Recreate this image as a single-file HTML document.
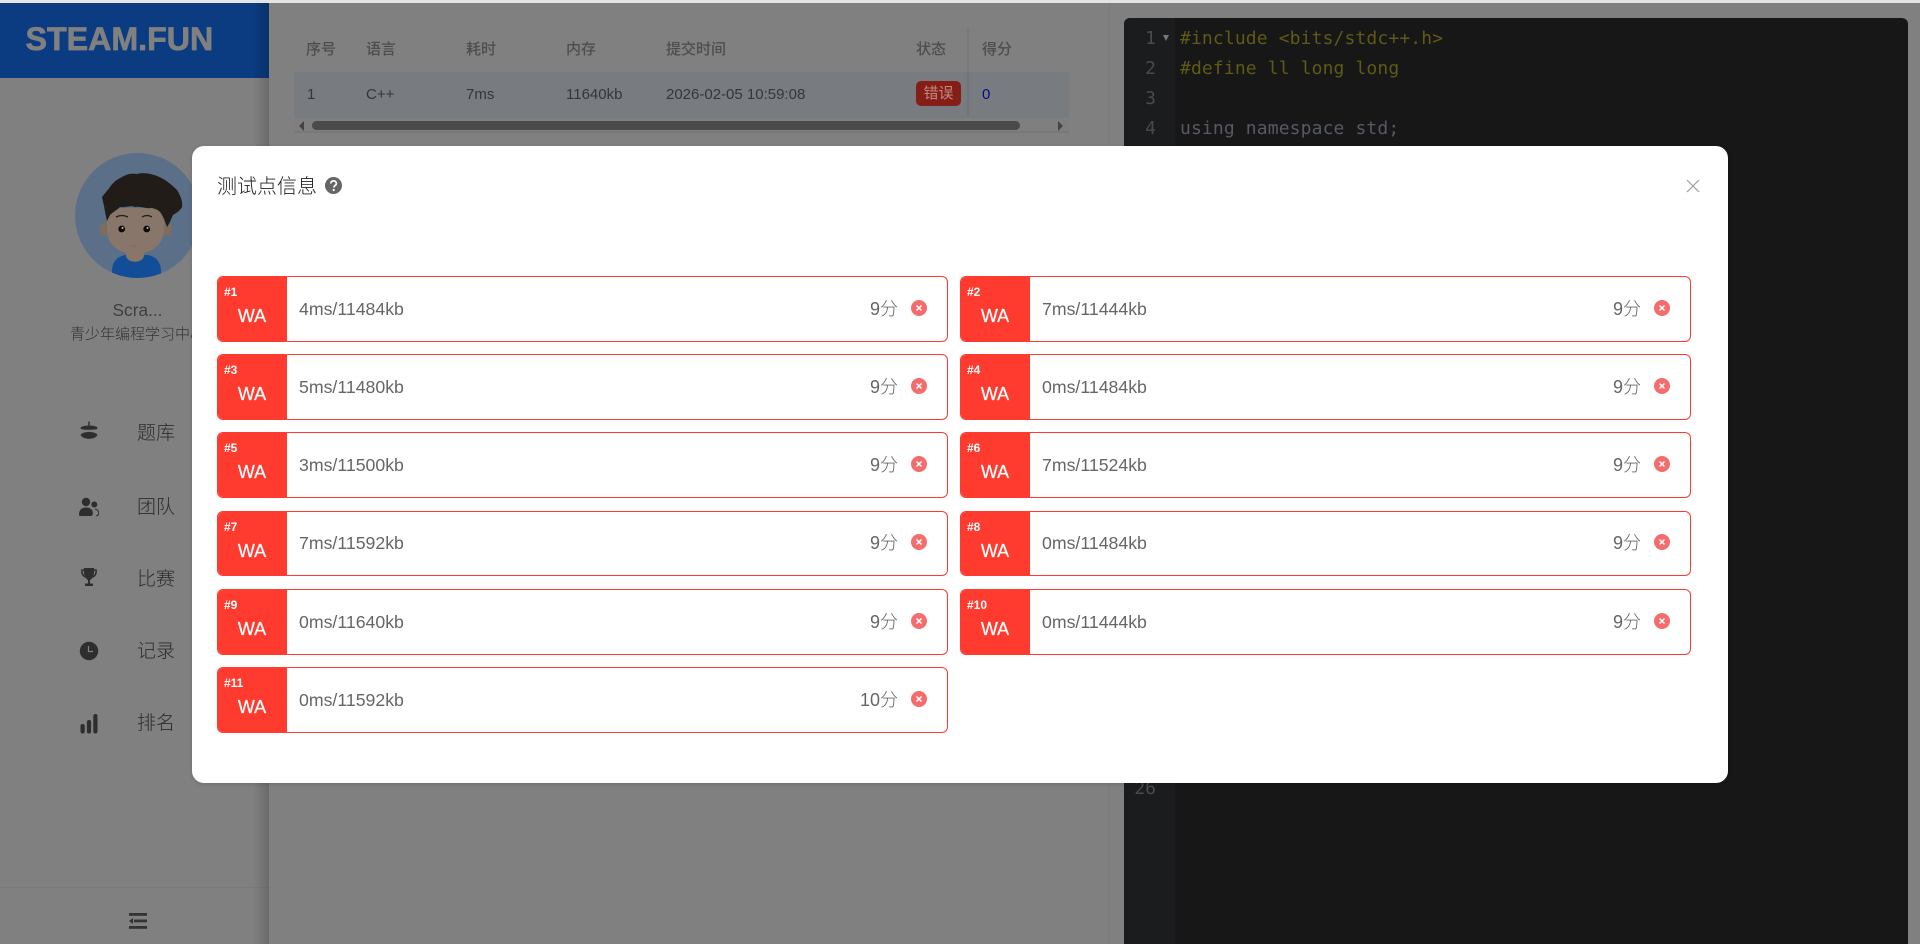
<!DOCTYPE html>
<html lang="zh"><head><meta charset="utf-8"><title>测试点信息</title>
<style>
*{box-sizing:border-box}
html,body{margin:0;padding:0;width:1920px;height:944px;overflow:hidden;background:#808080;font-family:"Liberation Sans","Noto Sans CJK SC",sans-serif}
.a{position:absolute;white-space:nowrap}
#top{left:0;top:0;width:1920px;height:3px;background:#e4e4e4}
#side{left:0;top:3px;width:269px;height:941px;background:#808080}
#sideshadow{left:253px;top:3px;width:16px;height:941px;background:linear-gradient(90deg,rgba(0,0,0,0),rgba(0,0,0,.17));z-index:3}
#logo{left:0;top:3px;width:269px;height:75px;background:#0b3b80}
#logot{left:25.500px;top:19px;font-size:32.2px;line-height:40px;font-weight:bold;color:#808080;-webkit-text-stroke:.7px #808080}
.m{left:137px;font-size:19px;line-height:26px;color:#2c2c2c;font-weight:300}
.ic{position:absolute;left:79px}
.th{top:40px;font-size:15px;line-height:20px;color:#4d4d4d;font-weight:500}
.td{top:85px;font-size:15px;line-height:20px;color:#363636}
.ln{left:1126px;width:30px;text-align:right;font:18px/30px "DejaVu Sans Mono",monospace;color:#4a4a4a;z-index:2}
.cd{left:1180px;font:18px/30px "DejaVu Sans Mono",monospace;letter-spacing:.13px;z-index:2}
#modal{left:192px;top:146px;width:1536px;height:637px;background:#fff;border-radius:12px;z-index:5;box-shadow:0 1px 4px rgba(0,0,0,.15)}
.c{position:absolute;width:731px;height:66px;background:#fff;border:1px solid #ff3b30;border-radius:6px;z-index:6;overflow:hidden}
.b{position:absolute;left:-1px;top:-1px;width:70px;height:66px;background:#ff3b30;color:#fff}
.n{position:absolute;left:7px;top:8px;font-size:12px;line-height:16px;font-weight:bold}
.w{position:absolute;left:0;width:70px;top:29px;text-align:center;font-size:18px;line-height:22px;-webkit-text-stroke:.25px #fff}
.t{position:absolute;left:81px;top:20px;font-size:17.7px;line-height:24px;color:#666}
.s{position:absolute;right:49px;top:19px;font-size:18px;line-height:26px;color:#666;font-weight:300}
.x{position:absolute;left:693px;top:23px;width:16px;height:16px}
.r4{height:65px}
.r4 .t{top:19px}.r4 .s{top:18px}.r4 .x{top:22px}
</style></head><body>
<div class="a" id="top"></div>
<div class="a" id="side"></div>
<div class="a" id="logo"></div>
<div class="a" id="logot">STEAM.FUN</div>
<div class="a" id="sideshadow"></div>

<svg class="a" style="left:75px;top:153px" width="125" height="125" viewBox="0 0 125 125">
<defs><clipPath id="av"><circle cx="62.5" cy="62.5" r="62.5"/></clipPath></defs>
<g clip-path="url(#av)"><rect width="125" height="125" fill="#5b7088"/>
<path d="M37 125V118C37 108 44 102 52 102H71C79 102 86 108 86 118V125Z" fill="#124d97"/>
<path d="M51 92H69V102C69 111 51 111 51 102Z" fill="#8a7668"/>
<circle cx="31" cy="76" r="7" fill="#7d6c60"/><circle cx="90" cy="76" r="7" fill="#7d6c60"/>
<path d="M32 55H89V76C89 92 76 101 60 101S32 92 32 76Z" fill="#877669"/>
<path d="M32 68C30 60 29 52 27 44C30 40 33 37 35 34C39 28 43 26 47 24C52 21 57 20 62 21C69 19 76 21 82 23C90 26 97 32 102 37C105 42 108 48 107 54C105 58 101 60 98 62C96 66 95 70 92 74C90 68 88 63 85 59C82 56 80 56 77 55C71 56 66 53 60 54C55 52 50 55 45 54C42 57 38 59 35 62C34 64 33 66 32 68Z" fill="#211c17"/>
<path d="M41 64q6-3 12 0M67 64q5-3 10 0" stroke="#211c17" stroke-width="1.300" fill="none"/>
<circle cx="46.700" cy="76" r="3.400" fill="#0e0c0b"/><circle cx="71.700" cy="76" r="3.400" fill="#0e0c0b"/>
<circle cx="47.500" cy="75" r="1" fill="#bbb"/><circle cx="72.500" cy="75" r="1" fill="#bbb"/>
<circle cx="59" cy="84" r="1.100" fill="#9a6d62"/>
<path d="M55 92.500q4 1 8-.5q-3 3.500-8 .5z" fill="#a2604f"/></g></svg>

<div class="a" style="left:0;width:275px;top:298px;text-align:center;font-size:17.3px;line-height:24px;color:#3e3e3e">Scra...</div>
<div class="a" style="left:70px;top:325px;font-size:15px;line-height:20px;color:#333;font-weight:300">青少年编程学习中心</div>

<svg class="ic" style="top:421px" width="20" height="20" viewBox="0 0 20 20" fill="#2e2e2e"><rect x="9.300" y="0.500" width="1.400" height="4"/><path d="M2 6C6 4 14 4 18 6L18.500 8C14 9 6 9 1.500 8Z"/><path d="M1.500 14C4 9.800 16 9.800 18.500 14 16 19 4 19 1.500 14Z"/></svg>
<svg class="ic" style="top:497px" width="20" height="20" viewBox="0 0 20 20" fill="#2e2e2e"><circle cx="7" cy="5" r="4.200"/><circle cx="15.300" cy="7.500" r="3"/><path d="M0 18c0-5.500 3-7.500 7-7.500s6.500 1.800 6.800 5c.2 2-.6 3.500-2 3.500H1.500C.5 19 0 18.700 0 18z"/><path d="M16 12c2.500.5 3.700 2.300 3.700 4.300 0 1.500-.8 2.400-2.500 2.400" fill="none" stroke="#2e2e2e" stroke-width="1"/></svg>
<svg class="ic" style="top:567px" width="20" height="20" viewBox="0 0 20 20" fill="#2e2e2e"><path d="M5 1h10s.5 4-.5 7.500c-.8 2.500-2.300 4-3.500 4.500v3.500h3V19H6v-2.500h3V13C7.800 12.500 6.300 11 5.500 8.500 4.500 5 5 1 5 1z"/><path d="M5 3H3c-.7 3 .8 6 3.500 7M15 3h2c.7 3-.8 6-3.500 7" fill="none" stroke="#2e2e2e" stroke-width="1.600"/></svg>
<svg class="ic" style="top:641px" width="20" height="20" viewBox="0 0 20 20"><circle cx="10" cy="10" r="9.200" fill="#2e2e2e"/><path d="M9.500 5v5.500h4.500" fill="none" stroke="#808080" stroke-width="1.200"/></svg>
<svg class="ic" style="top:714px" width="20" height="20" viewBox="0 0 20 20" fill="#2e2e2e"><rect x="1.500" y="10" width="4.200" height="9.500" rx="2"/><rect x="7.900" y="6" width="4.200" height="13.500" rx="2"/><rect x="14.300" y="0" width="4.200" height="19.500" rx="2"/></svg>
<div class="a m" style="top:421px">题库</div>
<div class="a m" style="top:495px">团队</div>
<div class="a m" style="top:567px">比赛</div>
<div class="a m" style="top:639px">记录</div>
<div class="a m" style="top:711px">排名</div>
<div class="a" style="left:0;top:887px;width:269px;height:1px;background:#7a7a7a"></div>
<svg class="a" style="left:129px;top:913px" width="18" height="16" viewBox="0 0 18 16" fill="#333"><rect x="0" y="0" width="18" height="2.800"/><rect x="5" y="6.500" width="13" height="2.800"/><path d="M0 8l4-3v6z"/><rect x="0" y="13" width="18" height="2.800"/></svg>

<!-- table -->
<div class="a" style="left:294px;top:72px;width:775px;height:46px;background:#787b80"></div>
<div class="a" style="left:294px;top:118px;width:775px;height:15px;background:#7f7f7f;border-bottom:2px solid #77777d"></div>
<div class="a" style="left:312px;top:121px;width:708px;height:9px;background:#4a4a4a;border-radius:5px"></div>
<div class="a" style="left:299px;top:121px;width:0;height:0;border:5px solid transparent;border-right-color:#444;border-left:0"></div>
<div class="a" style="left:1058px;top:121px;width:0;height:0;border:5px solid transparent;border-left-color:#444;border-right:0"></div>
<div class="a" style="left:967px;top:28px;width:2px;height:90px;background:rgba(0,0,0,.05)"></div>
<div class="a th" style="left:306px">序号</div><div class="a th" style="left:366px">语言</div><div class="a th" style="left:466px">耗时</div><div class="a th" style="left:566px">内存</div><div class="a th" style="left:666px">提交时间</div><div class="a th" style="left:916px">状态</div><div class="a th" style="left:982px">得分</div>
<div class="a td" style="left:307px">1</div><div class="a td" style="left:366px">C++</div><div class="a td" style="left:466px">7ms</div><div class="a td" style="left:566px">11640kb</div><div class="a td" style="left:666px">2026-02-05 10:59:08</div>
<div class="a" style="left:916px;top:81px;width:45px;height:25px;background:#861e18;border-radius:5px;color:#c08a82;font-size:15px;line-height:25px;text-align:center">错误</div>
<div class="a td" style="left:982px;color:#0a0a86">0</div>

<!-- editor -->
<div class="a" style="left:1109px;top:3px;width:1px;height:941px;background:#7b7b7b"></div>
<div class="a" style="left:1124px;top:18px;width:784px;height:926px;background:#171717;border-radius:6px 6px 0 0"></div>
<div class="a" style="left:1124px;top:18px;width:51px;height:926px;background:#1b1c1e;border-radius:6px 0 0 0"></div>
<div class="a ln" style="top:24px">1</div><div class="a ln" style="top:54px">2</div><div class="a ln" style="top:84px">3</div><div class="a ln" style="top:114px">4</div><div class="a ln" style="top:774px">26</div>
<div class="a" style="left:1163px;top:35px;width:0;height:0;border-left:3.500px solid transparent;border-right:3.500px solid transparent;border-top:6px solid #777;z-index:2"></div>
<div class="a cd" style="top:24px;color:#5f5a17">#include &lt;bits/stdc++.h&gt;</div>
<div class="a cd" style="top:54px;color:#5f5a17">#define ll long long</div>
<div class="a cd" style="top:114px;color:#555a63">using namespace std;</div>

<!-- modal -->
<div class="a" id="modal"></div>
<div class="a" style="left:217px;top:173px;font-size:20px;line-height:28px;color:#222;z-index:6;font-weight:300">测试点信息</div>
<svg class="a" style="left:325px;top:177px;z-index:6" width="17" height="17" viewBox="0 0 17 17"><circle cx="8.500" cy="8.500" r="8.500" fill="#666"/><path d="M5.800 6.500c0-3.500 5.600-3.500 5.600 0 0 2-2.600 2-2.600 4" fill="none" stroke="#fff" stroke-width="1.700"/><circle cx="8.700" cy="13" r="1.100" fill="#fff"/></svg>
<svg class="a" style="left:1686px;top:179px;z-index:6" width="14" height="14" viewBox="0 0 14 14"><path d="M1 1l12 12M13 1L1 13" stroke="#999" stroke-width="1.100" fill="none"/></svg>

<div class="c" style="left:217px;top:276px"><div class="b"><div class="n">#1</div><div class="w">WA</div></div><div class="t">4ms/11484kb</div><div class="s">9分</div><svg class="x" viewBox="0 0 16 16"><circle cx="8" cy="8" r="8" fill="#f56c6c"/><path d="M5.500 5.500l5 5M10.500 5.500l-5 5" stroke="#fff" stroke-width="1.500"/></svg></div>
<div class="c" style="left:960px;top:276px"><div class="b"><div class="n">#2</div><div class="w">WA</div></div><div class="t">7ms/11444kb</div><div class="s">9分</div><svg class="x" viewBox="0 0 16 16"><circle cx="8" cy="8" r="8" fill="#f56c6c"/><path d="M5.500 5.500l5 5M10.500 5.500l-5 5" stroke="#fff" stroke-width="1.500"/></svg></div>
<div class="c" style="left:217px;top:354px"><div class="b"><div class="n">#3</div><div class="w">WA</div></div><div class="t">5ms/11480kb</div><div class="s">9分</div><svg class="x" viewBox="0 0 16 16"><circle cx="8" cy="8" r="8" fill="#f56c6c"/><path d="M5.500 5.500l5 5M10.500 5.500l-5 5" stroke="#fff" stroke-width="1.500"/></svg></div>
<div class="c" style="left:960px;top:354px"><div class="b"><div class="n">#4</div><div class="w">WA</div></div><div class="t">0ms/11484kb</div><div class="s">9分</div><svg class="x" viewBox="0 0 16 16"><circle cx="8" cy="8" r="8" fill="#f56c6c"/><path d="M5.500 5.500l5 5M10.500 5.500l-5 5" stroke="#fff" stroke-width="1.500"/></svg></div>
<div class="c" style="left:217px;top:432px"><div class="b"><div class="n">#5</div><div class="w">WA</div></div><div class="t">3ms/11500kb</div><div class="s">9分</div><svg class="x" viewBox="0 0 16 16"><circle cx="8" cy="8" r="8" fill="#f56c6c"/><path d="M5.500 5.500l5 5M10.500 5.500l-5 5" stroke="#fff" stroke-width="1.500"/></svg></div>
<div class="c" style="left:960px;top:432px"><div class="b"><div class="n">#6</div><div class="w">WA</div></div><div class="t">7ms/11524kb</div><div class="s">9分</div><svg class="x" viewBox="0 0 16 16"><circle cx="8" cy="8" r="8" fill="#f56c6c"/><path d="M5.500 5.500l5 5M10.500 5.500l-5 5" stroke="#fff" stroke-width="1.500"/></svg></div>
<div class="c r4" style="left:217px;top:511px"><div class="b"><div class="n">#7</div><div class="w">WA</div></div><div class="t">7ms/11592kb</div><div class="s">9分</div><svg class="x" viewBox="0 0 16 16"><circle cx="8" cy="8" r="8" fill="#f56c6c"/><path d="M5.500 5.500l5 5M10.500 5.500l-5 5" stroke="#fff" stroke-width="1.500"/></svg></div>
<div class="c r4" style="left:960px;top:511px"><div class="b"><div class="n">#8</div><div class="w">WA</div></div><div class="t">0ms/11484kb</div><div class="s">9分</div><svg class="x" viewBox="0 0 16 16"><circle cx="8" cy="8" r="8" fill="#f56c6c"/><path d="M5.500 5.500l5 5M10.500 5.500l-5 5" stroke="#fff" stroke-width="1.500"/></svg></div>
<div class="c" style="left:217px;top:589px"><div class="b"><div class="n">#9</div><div class="w">WA</div></div><div class="t">0ms/11640kb</div><div class="s">9分</div><svg class="x" viewBox="0 0 16 16"><circle cx="8" cy="8" r="8" fill="#f56c6c"/><path d="M5.500 5.500l5 5M10.500 5.500l-5 5" stroke="#fff" stroke-width="1.500"/></svg></div>
<div class="c" style="left:960px;top:589px"><div class="b"><div class="n">#10</div><div class="w">WA</div></div><div class="t">0ms/11444kb</div><div class="s">9分</div><svg class="x" viewBox="0 0 16 16"><circle cx="8" cy="8" r="8" fill="#f56c6c"/><path d="M5.500 5.500l5 5M10.500 5.500l-5 5" stroke="#fff" stroke-width="1.500"/></svg></div>
<div class="c" style="left:217px;top:667px"><div class="b"><div class="n">#11</div><div class="w">WA</div></div><div class="t">0ms/11592kb</div><div class="s">10分</div><svg class="x" viewBox="0 0 16 16"><circle cx="8" cy="8" r="8" fill="#f56c6c"/><path d="M5.500 5.500l5 5M10.500 5.500l-5 5" stroke="#fff" stroke-width="1.500"/></svg></div>
</body></html>
